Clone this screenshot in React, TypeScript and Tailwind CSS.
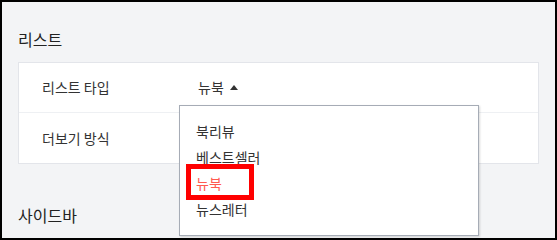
import React from 'react'

const font = { fontFamily: '"Noto Sans CJK KR", "Noto Sans", sans-serif' }

const options = ['북리뷰', '베스트셀러', '뉴북', '뉴스레터']

export default function App() {
    return (
        <div
            className="w-[557px] h-[240px] border-2 border-black bg-[#f3f4f6] overflow-hidden relative text-[#333]"
            style={font}
        >
            <div className="px-4 pt-[26px]">
                {/* 리스트 */}
                <h2 className="text-[16px] leading-[22px] font-normal text-[#222]">리스트</h2>
                <div className="mt-[12px] bg-white border border-[#e3e5ea] relative">
                    <div className="h-[50px] flex items-center pl-[23px] border-b border-[#eef0f3]">
                        <span className="w-[156px] text-[14px]">리스트 타입</span>
                        <span className="text-[14px] flex items-center gap-[6px]">
                            뉴북
                            <svg width="8" height="5" viewBox="0 0 8 5">
                                <path d="M0 5 L4 0 L8 5 Z" fill="#333" />
                            </svg>
                        </span>
                    </div>
                    <div className="h-[50px] flex items-center pl-[23px]">
                        <span className="w-[156px] text-[14px]">더보기 방식</span>
                    </div>

                    {/* dropdown */}
                    <div className="absolute left-[160px] top-[42px] w-[300px] h-[131px] bg-white border border-[#a6acb6] shadow-[1px_1px_2px_rgba(0,0,0,0.15)] pt-[12px] z-10">
                        {options.map((o) => (
                            <div
                                key={o}
                                className={`h-[26px] flex items-center pl-[16px] text-[14px] ${o === '뉴북' ? 'text-[#ff5a50]' : 'text-[#333]'}`}
                            >
                                {o}
                            </div>
                        ))}
                        <div className="absolute left-[6px] top-[58px] w-[68px] h-[36px] border-[5px] border-[#ff0000]" />
                    </div>
                </div>

                {/* 사이드바 */}
                <h2 className="mt-[40px] text-[16px] leading-[22px] font-normal text-[#222]">사이드바</h2>
            </div>
        </div>
    )
}
